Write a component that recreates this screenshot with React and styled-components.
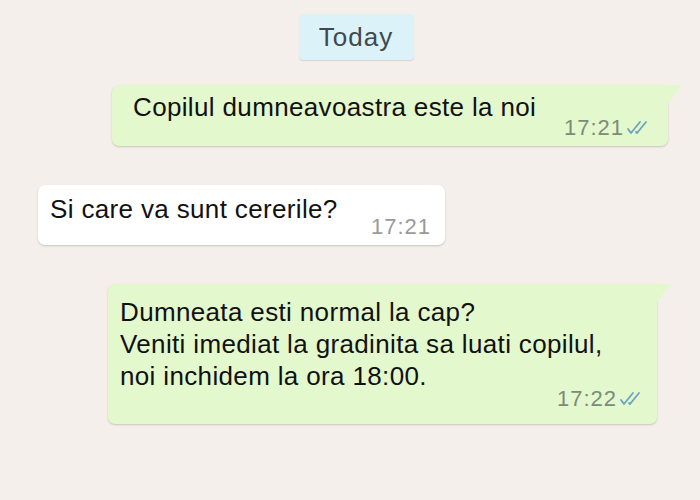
import React from "react";
import styled, { createGlobalStyle } from "styled-components";

const GlobalStyle = createGlobalStyle`
  html, body {
    margin: 0;
    padding: 0;
    background: #f4efeb;
  }
  body {
    font-family: "Liberation Sans", Arial, sans-serif;
  }
`;

function Ticks() {
  return (
    <svg width="26" height="16" viewBox="0 0 26 16">
      <path
        d="M2 9 L5 13 L14 2 M10 12 L11 13 L20 2"
        fill="none"
        stroke="#6aa3bf"
        strokeWidth="1.8"
        strokeLinecap="round"
        strokeLinejoin="round"
      />
    </svg>
  );
}

const messages = [
  {
    id: 1,
    out: true,
    lines: ["Copilul dumneavoastra este la noi"],
    time: "17:21",
  },
  {
    id: 2,
    out: false,
    lines: ["Si care va sunt cererile?"],
    time: "17:21",
  },
  {
    id: 3,
    out: true,
    lines: [
      "Dumneata esti normal la cap?",
      "Veniti imediat la gradinita sa luati copilul,",
      "noi inchidem la ora 18:00.",
    ],
    time: "17:22",
  },
];

function MessageText({ lines }) {
  return (
    <Text>
      {lines.map((line) => (
        <Line key={line}>{line}</Line>
      ))}
    </Text>
  );
}

function App() {
  return (
    <>
      <GlobalStyle />
      <Chat>
        <DateRow>
          <DateBadge>Today</DateBadge>
        </DateRow>
        <Row $out gap="39px" right="32px">
          <Bubble $out width="556px" height="61px" pad="6px 16px 10px 21px">
            <MessageText lines={messages[0].lines} />
            <Meta>
              <Time $out>{messages[0].time}</Time>
              <Ticks />
            </Meta>
          </Bubble>
        </Row>
        <Row gap="39px" left="38px">
          <Bubble width="407px" height="60px" pad="8px 14px 10px 12px">
            <MessageText lines={messages[1].lines} />
            <Meta>
              <Time>{messages[1].time}</Time>
            </Meta>
          </Bubble>
        </Row>
        <Row $out gap="39px" right="43px">
          <Bubble $out $stack width="549px" height="140px" pad="12px 12px 17px 12px">
            <MessageText lines={messages[2].lines} />
            <Meta $lift>
              <Time $out>{messages[2].time}</Time>
              <Ticks />
            </Meta>
          </Bubble>
        </Row>
      </Chat>
    </>
  );
}

export default App;

const Chat = styled.div`
  width: 700px;
  height: 500px;
  box-sizing: border-box;
  padding-top: 14px;
  display: flex;
  flex-direction: column;
  background: #f4efeb;
  overflow: hidden;
`;

const DateRow = styled.div`
  display: flex;
  justify-content: center;
  padding-left: 12px;
  margin-bottom: 25px;
`;

const DateBadge = styled.div`
  width: 115px;
  height: 46px;
  display: flex;
  align-items: center;
  justify-content: center;
  background: #dcf2f9;
  color: #3f494e;
  font-size: 26px;
  letter-spacing: 1px;
  border-radius: 4px;
  box-shadow: 0 1px 1px rgba(0, 0, 0, 0.12);
`;

const Row = styled.div`
  display: flex;
  justify-content: ${(p) => (p.$out ? "flex-end" : "flex-start")};
  padding-left: ${(p) => p.left || "0"};
  padding-right: ${(p) => p.right || "0"};
  margin-bottom: ${(p) => p.gap};
`;

const Bubble = styled.div`
  position: relative;
  box-sizing: border-box;
  width: ${(p) => p.width};
  min-height: ${(p) => p.height};
  padding: ${(p) => p.pad};
  display: flex;
  flex-direction: ${(p) => (p.$stack ? "column" : "row")};
  justify-content: space-between;
  align-items: flex-end;
  background: ${(p) => (p.$out ? "#e4f8cd" : "#ffffff")};
  border-radius: ${(p) => (p.$out ? "7px 0 7px 7px" : "7px")};
  box-shadow: 0 1px 2px rgba(0, 0, 0, 0.18);

  &::after {
    content: "";
    display: ${(p) => (p.$out ? "block" : "none")};
    position: absolute;
    top: 0;
    right: -14px;
    width: 0;
    height: 0;
    border-top: 18px solid #e4f8cd;
    border-right: 14px solid transparent;
  }
`;

const Text = styled.div`
  align-self: flex-start;
  display: flex;
  flex-direction: column;
  align-items: flex-start;
  color: #111111;
  font-size: 26px;
  letter-spacing: 0.35px;
  line-height: 32px;
`;

const Line = styled.div`
  white-space: pre;
`;

const Meta = styled.div`
  display: flex;
  align-items: center;
  gap: 2px;
  flex-shrink: 0;
  margin-top: ${(p) => (p.$lift ? "-4px" : "0")};
`;

const Time = styled.span`
  font-size: 22px;
  letter-spacing: 1px;
  line-height: 16px;
  color: ${(p) => (p.$out ? "#7a8c7a" : "#9a9a9a")};
`;
